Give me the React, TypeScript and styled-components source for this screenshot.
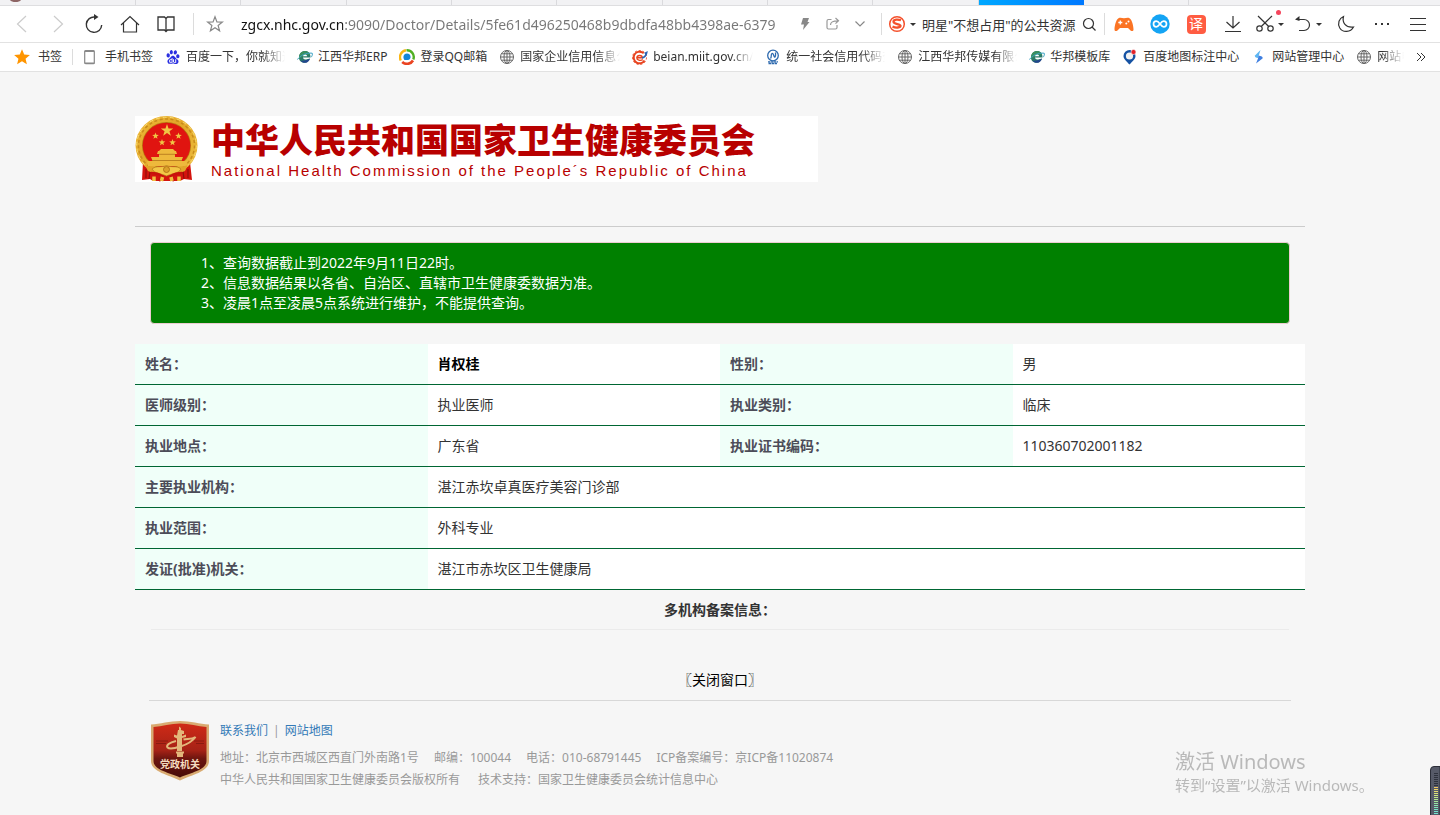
import React from "react";
import styled, { createGlobalStyle, css } from "styled-components";
import { SiBaidu } from "react-icons/si";

const GlobalStyle = createGlobalStyle`
  * { box-sizing: border-box; }
  body {
    margin: 0;
    background: #f6f6f6;
    color: #333;
    font: 14px/20px "Noto Sans", "Noto Sans CJK SC", sans-serif;
  }
  button, input {
    font: inherit;
    color: inherit;
    border: 0;
    padding: 0;
    margin: 0;
    background: none;
    outline: 0;
  }
  svg { display: block; flex: none; }
`;

/* ---------- browser chrome ---------- */

const TabStrip = styled.div`
  display: flex;
  height: 6px;
  background: #f2f2f4;
  border-bottom: 1px solid #dedee0;
  overflow: hidden;
`;

const Tab = styled.div<{ $first?: boolean; $active?: boolean }>`
  flex: none;
  width: ${(p) => (p.$first ? 136 : 105)}px;
  height: 6px;
  padding-left: 9px;
  border-right: 1px solid #dadadd;
  &:nth-child(3n) {
    width: 106px;
  }
  ${(p) =>
    p.$active &&
    css`
      border-right: 0;
      background: linear-gradient(90deg, #00a8ff, #0078ff);
    `}
`;

const Toolbar = styled.div`
  display: flex;
  align-items: center;
  height: 37px;
  padding: 0 4px;
  background: #fff;
  border-bottom: 1px solid #e2e2e2;
`;

const ToolButton = styled.button<{ $w?: number; $color?: string }>`
  position: relative;
  display: flex;
  flex: none;
  align-items: center;
  justify-content: center;
  gap: 4px;
  width: ${(p) => p.$w ?? 36}px;
  height: 36px;
  color: ${(p) => p.$color ?? "#333"};
`;

const Divider = styled.span<{ $h?: number; $m?: string }>`
  flex: none;
  width: 1px;
  height: ${(p) => p.$h ?? 22}px;
  margin: ${(p) => p.$m ?? "0"};
  background: #dcdcdc;
`;

const UrlInput = styled.input`
  flex: 1;
  min-width: 0;
  height: 30px;
  margin: 0 10px 0 10px;
  font-size: 14px;
  color: transparent;
  background: linear-gradient(90deg, #111 102px, #777 102px);
  background-clip: text;
  -webkit-background-clip: text;
`;

const SearchInput = styled.input`
  flex: none;
  width: 155px;
  height: 30px;
  margin-left: 7px;
  font-size: 13px;
  color: #333;
`;

const Caret = styled.span`
  border: 3px solid transparent;
  border-top-color: #333;
  border-bottom: 0;
`;

const RedDot = styled.span`
  position: absolute;
  top: 4px;
  right: 7px;
  width: 5px;
  height: 5px;
  border-radius: 50%;
  background: #f5455c;
`;

const Translate = styled.span`
  width: 19px;
  height: 19px;
  border-radius: 4px;
  background: #ff5c42;
  color: #fff;
  font-size: 14px;
  line-height: 18px;
  text-align: center;
`;

const BookmarkBar = styled.nav`
  display: flex;
  align-items: center;
  gap: 12px;
  height: 29px;
  padding: 0 14px;
  background: #fff;
  border-bottom: 1px solid #e2e2e2;
  font-size: 12px;
  overflow: hidden;
`;

const Bookmark = styled.a<{ $gap?: number }>`
  display: flex;
  flex: none;
  align-items: center;
  gap: ${(p) => p.$gap ?? 5}px;
  color: #333;
  text-decoration: none;
  white-space: nowrap;
`;

const BookmarkText = styled.span<{ $fade?: number }>`
  ${(p) =>
    p.$fade &&
    css`
      width: ${p.$fade}px;
      overflow: hidden;
      mask-image: linear-gradient(90deg, #000 calc(100% - 22px), transparent);
    `}
`;

const MoreButton = styled.button`
  margin-left: auto;
`;

/* ---------- page ---------- */

const Page = styled.main`
  max-width: 1170px;
  margin: 0 auto;
  padding-top: 44px;
`;

const Banner = styled.header`
  display: flex;
  width: 683px;
  max-width: 100%;
  height: 66px;
  gap: 12px;
  background: #fff;
  color: #b80000;
`;

const BannerTitle = styled.h1`
  margin: 4px 0 0;
  font-size: 34px;
  line-height: 40px;
  font-weight: 900;
  white-space: nowrap;
`;

const BannerSub = styled.p`
  margin: 0;
  font: 15px/22px "Liberation Sans", sans-serif;
  letter-spacing: 2px;
  white-space: nowrap;
`;

const Rule = styled.hr<{ $color: string; $margin: string }>`
  height: 1px;
  border: 0;
  margin: ${(p) => p.$margin};
  background: ${(p) => p.$color};
`;

const Notice = styled.ol`
  margin: 15px 15px 20px;
  padding: 10px 50px;
  border: 1px solid #ebccd1;
  border-radius: 4px;
  background: #008000;
  color: #fff;
  list-style: none;
`;

const Records = styled.table`
  width: 100%;
  table-layout: fixed;
  border-collapse: separate;
  border-spacing: 0;
`;

const cell = css`
  height: 41px;
  padding: 0 10px;
  border-bottom: 1px solid #006633;
  text-align: left;
`;

const Label = styled.th`
  ${cell}
  background: #f0fff9;
  color: #4c4c58;
  font-weight: 700;
`;

const Value = styled.td<{ $strong?: boolean }>`
  ${cell}
  background: #fff;
  ${(p) => p.$strong && "color: #000; font-weight: 700;"}
`;

const SubHeading = styled.h2`
  margin: 0 16px;
  border-bottom: 1px solid #ebebeb;
  font-size: 14px;
  line-height: 39px;
  text-align: center;
`;

const CloseLink = styled.a`
  display: block;
  margin-top: 40px;
  color: #000;
  text-align: center;
  text-decoration: none;
`;

const Footer = styled.footer`
  display: flex;
  gap: 10px;
  padding: 0 15px;
  color: #999;
  font-size: 12px;
`;

const FooterLine = styled.p<{ $gap: number; $nav?: boolean }>`
  display: flex;
  gap: ${(p) => p.$gap}px;
  margin: 0 0 ${(p) => (p.$nav ? 6 : 0)}px;
  line-height: ${(p) => (p.$nav ? 20 : 22)}px;
  white-space: nowrap;
`;

const FooterLink = styled.a`
  color: #337ab7;
  text-decoration: none;
`;

/* ---------- desktop overlays ---------- */

const Watermark = styled.div`
  position: fixed;
  right: 62px;
  bottom: 19px;
  width: 203px;
  color: #b9b9b9;
  font-size: 15px;
  line-height: 22px;
  white-space: nowrap;
`;

const WatermarkTitle = styled.div`
  font-size: 20px;
  line-height: 24px;
`;

const Gadget = styled.div`
  position: fixed;
  right: 0;
  bottom: 0;
`;

/* ---------- icons ---------- */

const Line = ({ w, h, sw = 1.2, children }: { w: number; h: number; sw?: number; children: React.ReactNode }) => (
  <svg width={w} height={h} viewBox={`0 0 ${w} ${h}`} fill="none" stroke="currentColor" strokeWidth={sw}>
    {children}
  </svg>
);

const Globe = () => (
  <Line w={16} h={16} sw={1}>
    <g stroke="#666">
      <circle cx="8" cy="8" r="6.5" />
      <ellipse cx="8" cy="8" rx="3" ry="6.5" />
      <path d="M8 1.5v13M1.5 8h13M2.4 4.8h11.2M2.4 11.2h11.2" />
    </g>
  </Line>
);

const EdgeLike = () => (
  <svg width="16" height="16" viewBox="0 0 16 16">
    <path d="M2 8.2C2 4.6 4.6 2 8 2c3.600 0 5.600 2.600 5.500 6.400H6C6.200 10.600 9.500 11 13 9.600 11.500 13 9.200 14 7.200 13.800 4 13.600 2 11.500 2 8.200z" fill="#2c7a68" />
    <path d="M2 8.500C2 4.800 5 2 8 2c2.500 0 4.300 1.300 5 3.500C9 5.500 5 7 2 10.500z" fill="#3c8f5d" />
    <path d="M3.500 11.500C5 13.500 8 14.500 10 13.400 12 12.500 12.700 11 13 9.600 10 11.500 6 12 3.500 11.500z" fill="#23468e" />
    <path d="M6 7.300C6.200 5 9.800 4.600 10.200 7.300z" fill="#fff" />
    <path d="M.5 10.500C3 6.500 9 3.500 15.200 4.200c.6 1-.2 3-1 4" fill="none" stroke="#3aa0c4" strokeWidth="1" />
  </svg>
);

const QQMail = () => (
  <svg width="16" height="16" viewBox="0 0 16 16">
    <circle cx="8" cy="8" r="6.500" fill="#fff" />
    <path d="M1.800 11.500A7 7 0 0 1 7 1.300" fill="none" stroke="#fbb614" strokeWidth="2.400" />
    <path d="M7.500 1.300A6.800 6.800 0 0 1 14.300 10.500" fill="none" stroke="#51b024" strokeWidth="2.400" />
    <path d="M14 11.500A7 7 0 0 1 3.200 13" fill="none" stroke="#ea4321" strokeWidth="2.600" />
    <path d="M8 4.500c2.300 0 3.600 1.600 3.600 3.500 0 1.500-1.100 2.900-2.700 2.900H5.400C4.700 10.100 4.400 9.200 4.400 8c0-1.900 1.400-3.500 3.600-3.500z" fill="#1686d9" />
  </svg>
);

const MiitIcon = () => (
  <svg width="16" height="16" viewBox="0 0 16 16" fill="none">
    <circle cx="7.500" cy="8.500" r="5.800" stroke="#e8431f" strokeWidth="2" strokeDasharray="27 7" pathLength="34" transform="rotate(30 7.500 8.500)" />
    <circle cx="7.500" cy="8.500" r="7" stroke="#e8431f" strokeWidth="1" strokeDasharray="2 2" />
    <path d="M4.800 8.700h5.600C10.200 5.600 5.100 5.800 4.800 8.700c0 2.600 3.600 3.400 6 2" stroke="#e8431f" strokeWidth="1.400" />
    <path d="M10 9c2.500-.6 4.200-2.600 4.700-5.500l-2 1" stroke="#2a64b4" strokeWidth="1.600" />
  </svg>
);

const CodeIcon = () => (
  <svg width="16" height="16" viewBox="0 0 16 16" fill="none" stroke="#2d69ae">
    <circle cx="8" cy="6.500" r="5.300" strokeWidth="1.300" />
    <path d="M5.500 9.500c1.500-1.500 0-4 1.500-5s2 4.500 3 3.500.5-3 .5-4.500" strokeWidth="1.300" />
    <path d="M3 12.800h10M3.500 14.500h9" strokeWidth="1.300" strokeDasharray="2.500 .5" />
  </svg>
);

const MapPin = () => (
  <svg width="16" height="16" viewBox="0 0 16 16">
    <path d="M7.500 1A6 6 0 0 0 1.500 7c0 3.400 3.200 5.200 6 8.600 2.800-3.400 6-5.200 6-8.600a6 6 0 0 0-6-6z" fill="#1552a3" />
    <circle cx="7.500" cy="7" r="3.600" fill="#f2f2f2" />
    <circle cx="11.500" cy="3" r="2.500" fill="#e32128" stroke="#fff" strokeWidth=".6" />
  </svg>
);

const BlueBolt = () => (
  <svg width="16" height="16" viewBox="0 0 16 16">
    <path d="M9.500 1 4 6.500c-.6 1.500 1 2.200 3 2.500z" fill="#5db6f2" />
    <path d="M7.500 6.500 7 9.500 5 14.500 11.500 9.500c1-1.600-1.500-2.500-4-3z" fill="#3f7fe0" />
  </svg>
);

const Phone = () => (
  <svg width="16" height="16" viewBox="0 0 16 16">
    <rect x="0.700" y="1.700" width="9.600" height="13" rx="1" fill="none" stroke="#888" strokeWidth="1.200" />
    <path d="M.7 2.200h9.600M.7 14.200h9.600" stroke="#888" strokeWidth="1.500" />
  </svg>
);

const BaiduPaw = () => (
  <svg width="16" height="16" viewBox="0 0 16 16">
    <g transform="translate(1 1)">
      <SiBaidu size={14} color="#2a2fe0" />
    </g>
  </svg>
);

const starPoints = (cx: number, cy: number, r: number, inner = 0.4) =>
  Array.from({ length: 10 }, (_, i) => {
    const a = (Math.PI / 5) * i - Math.PI / 2;
    const d = i % 2 ? r * inner : r;
    return `${(cx + d * Math.cos(a)).toFixed(2)},${(cy + d * Math.sin(a)).toFixed(2)}`;
  }).join(" ");

const Emblem = () => (
  <svg width="64" height="66" viewBox="0 0 64 66" role="img" aria-label="国徽">
    <defs>
      <linearGradient id="gold" x1="0" y1="0" x2="1" y2="1">
        <stop offset="0" stopColor="#f0bb3a" />
        <stop offset=".4" stopColor="#e3a729" />
        <stop offset="1" stopColor="#edbe3f" />
      </linearGradient>
    </defs>
    <path d="M8 46 7 64l8-1 3 2h27l4-2 8 1-2-18z" fill="#d4140e" />
    <path d="M11 53v9M15 55l-1 8M48 55l1 8M53 53v9" stroke="#93100a" strokeWidth="1.200" />
    <ellipse cx="31.500" cy="29.500" rx="31" ry="29.500" fill="url(#gold)" />
    <ellipse cx="31.500" cy="29.500" rx="28" ry="26.500" fill="none" stroke="#c98d1c" strokeWidth="1.500" strokeDasharray="3 2.500" />
    <ellipse cx="31.500" cy="29.500" rx="29.800" ry="28.300" fill="none" stroke="#f8dc72" strokeWidth="1" strokeDasharray="4 3" />
    <ellipse cx="31.500" cy="29.500" rx="24.500" ry="23.500" fill="#b97a12" />
    <ellipse cx="31.500" cy="29.500" rx="23.800" ry="22.800" fill="#e01410" />
    <g fill="#f0c544">
      <polygon points={starPoints(32, 14.500, 6.500)} />
      <polygon points={starPoints(20.500, 20, 3.500)} />
      <polygon points={starPoints(43.500, 20, 3.500)} />
      <polygon points={starPoints(27, 26.500, 3.500)} />
      <polygon points={starPoints(37.500, 26.500, 3.500)} />
    </g>
    <path d="M24 35 26 33h12l2 2h1l1 3H22l1-3zM24 38h16v3H24zM16 41h32l-2 5H18zM12 45h40l-1 5H13z" fill="#eeb93c" />
    <path d="M24 38.300h16M17 44.500h30" stroke="#b0741a" strokeWidth=".8" />
    <path d="M10 49c5 3 38 3 43 0l-3 6c-5 3-32 3-37 0z" fill="#e2a52a" />
    <path d="M17 53c5-4 9-1 14.500-3.500C37 52 41 49 46 53c-3 5-8 4-14.500 7C25 57 20 58 17 53z" fill="#f3c747" stroke="#b0741a" strokeWidth=".7" />
    <circle cx="31.500" cy="53.500" r="3" fill="#dca02a" stroke="#a86a10" strokeWidth=".8" />
    <path d="M16 57c4 0 8 1 11 3l-3 5M47 57c-4 0-8 1-11 3l3 5" fill="none" stroke="#c8120b" strokeWidth="2.500" />
    <path d="M19 60.500v4.500M27.500 61l-1 4M36 61l1 4M44 60.500v4.500" stroke="#f0c040" strokeWidth="3.500" />
  </svg>
);

const AgencyBadge = () => (
  <svg width="60" height="60" viewBox="0 0 60 60" role="img" aria-label="党政机关">
    <defs>
      <linearGradient id="badge" x1="0" y1="0" x2="0" y2="1">
        <stop offset="0" stopColor="#d02a17" />
        <stop offset=".5" stopColor="#a52216" />
        <stop offset=".65" stopColor="#6d150f" />
        <stop offset="1" stopColor="#470b08" />
      </linearGradient>
    </defs>
    <path d="M1 3.500C10 3 20 0 30 0s20 3 29 3.500V40c0 11-17 13.500-29 19.500C18 53.500 1 51 1 40z" fill="#d9ab72" />
    <path d="M3.500 6C12 5.500 21 2.500 30 2.500S48 5.500 56.500 6v34c0 9-15.500 11.500-26.500 16.500C19 51.500 3.500 49 3.500 40z" fill="url(#badge)" />
    <path d="M6 20h12M6 22.500h10M44 20h10M46 22.500h8" stroke="#8a1a10" strokeWidth="1" />
    <g fill="#e3b77b">
      <path d="M28 9h1V5.500L31 7v2l3 1v3h-2v2l4-1.500V16l-4 1v13h-5V17.500l-3-1.500v-2.500l3 1z" />
      <path d="M26 30.500h8v2h-1V36h-6v-3.500h-1z" />
    </g>
    <path d="M26 20c-7 1.500-10 4.500-8.500 6.500 3 3 22-2 28-10.500-4 2.500-8 1.500-12 2.500" fill="none" stroke="#e3b77b" strokeWidth="2" />
    <text x="30" y="47" textAnchor="middle" fill="#f5dcc0" fontSize="10" fontWeight="700">
      党政机关
    </text>
  </svg>
);

const meterColors = ["#2e323d", "#2e323d", "#2e323d", "#2e323d", "#2e323d", "#2e323d", "#2e323d", "#f0c860", "#ecd468", "#e6dc70", "#dce478", "#cee880", "#c0e888", "#b2e890", "#a4e898", "#98e8a4", "#8ce6b0", "#80e4ba", "#78e2c4", "#74e0cc", "#74e0cc"];

const Meter = () => (
  <svg width="10" height="49" viewBox="0 0 10 49">
    <path d="M10 .5H4A3.500 3.500 0 0 0 .5 4v46H10z" fill="#565a68" stroke="#2b2e38" />
    {meterColors.map((c, i) => (
      <rect key={i} x="4" y={7 + i * 2} width="4" height="1" fill={c} shapeRendering="crispEdges" />
    ))}
  </svg>
);

/* ---------- data ---------- */

const bookmarks: { icon: React.ReactNode; text: string; fade?: number }[] = [
  { icon: <Phone />, text: "手机书签" },
  { icon: <BaiduPaw />, text: "百度一下，你就知道", fade: 99 },
  { icon: <EdgeLike />, text: "江西华邦ERP" },
  { icon: <QQMail />, text: "登录QQ邮箱" },
  { icon: <Globe />, text: "国家企业信用信息公示", fade: 100 },
  { icon: <MiitIcon />, text: "beian.miit.gov.cn/", fade: 100 },
  { icon: <CodeIcon />, text: "统一社会信用代码查询", fade: 99 },
  { icon: <Globe />, text: "江西华邦传媒有限公司", fade: 99 },
  { icon: <EdgeLike />, text: "华邦模板库" },
  { icon: <MapPin />, text: "百度地图标注中心" },
  { icon: <BlueBolt />, text: "网站管理中心" },
  { icon: <Globe />, text: "网站电", fade: 27 },
];

const pairs = [
  ["姓名：", "肖权桂", "性别：", "男"],
  ["医师级别：", "执业医师", "执业类别：", "临床"],
  ["执业地点：", "广东省", "执业证书编码：", "110360702001182"],
];

const wide = [
  ["主要执业机构：", "湛江赤坎卓真医疗美容门诊部"],
  ["执业范围：", "外科专业"],
  ["发证(批准)机关：", "湛江市赤坎区卫生健康局"],
];

const BrowserTabs = () => (
  <TabStrip>
    <Tab $first>
      <svg width="14" height="3" viewBox="0 0 14 3">
        <path d="M1 0h11c-1 1.500-3 2-5.500 2S2 1.500 1 0z" fill="#8d6464" />
      </svg>
    </Tab>
    {Array.from({ length: 8 }, (_, i) => (
      <Tab key={i} />
    ))}
    <Tab $active />
    <Tab />
  </TabStrip>
);

const BrowserToolbar = () => (
  <Toolbar>
    <ToolButton aria-label="后退" $color="#ccc">
      <Line w={18} h={18}><path d="M13 1 4.500 9l8.500 8" /></Line>
    </ToolButton>
    <ToolButton aria-label="前进" $color="#ccc">
      <Line w={18} h={18}><path d="m5 1 8.500 8L5 17" /></Line>
    </ToolButton>
    <ToolButton aria-label="刷新">
      <Line w={18} h={20} sw={1.400}>
        <path d="M10 3a7.700 7.700 0 1 0 6.700 8" />
        <path d="m9 0 4.500 3L9 6z" fill="currentColor" stroke="none" />
      </Line>
    </ToolButton>
    <ToolButton aria-label="主页">
      <Line w={20} h={18}><path d="m1 10 9-8.500L19 10M3.500 8v9h13V8" /></Line>
    </ToolButton>
    <ToolButton aria-label="阅读">
      <Line w={18} h={18} sw={1.300}><path d="M1 2h6.500L9 3.500 10.500 2H17v13h-6.500L9 16.500 7.500 15H1zM9 3v14" /></Line>
    </ToolButton>
    <Divider $m="0 5px 0 9px" />
    <ToolButton aria-label="收藏" $w={32} $color="#888">
      <Line w={18} h={18} sw={1.200}><polygon points={starPoints(9, 9.500, 7.800, 0.420)} /></Line>
    </ToolButton>
    <UrlInput aria-label="地址栏" defaultValue="zgcx.nhc.gov.cn:9090/Doctor/Details/5fe61d496250468b9dbdfa48bb4398ae-6379" />
    <ToolButton aria-label="极速模式" $w={28} $color="#888">
      <svg width="10" height="14" viewBox="0 0 10 14"><path d="M3 1h6L7.500 5H9.500L3 13l1-5.500H1z" fill="#888" /></svg>
    </ToolButton>
    <ToolButton aria-label="分享" $w={28} $color="#999">
      <Line w={14} h={14}><path d="M5.500 2.500H2.500A1.500 1.500 0 0 0 1 4v6.500A1.500 1.500 0 0 0 2.500 12H9.500A1.500 1.500 0 0 0 11 10.500V8M4.500 8c0-3 2.500-4.200 7.500-4.200M9.500 1l3 2.800-3 2.800" /></Line>
    </ToolButton>
    <ToolButton aria-label="展开" $w={26} $color="#888">
      <Line w={12} h={8}><path d="m1.500 1.500 4.500 4.500 4.500-4.500" /></Line>
    </ToolButton>
    <Divider $m="0 7px 0 8px" />
    <ToolButton aria-label="搜索引擎" $w={26}>
      <svg width="18" height="18" viewBox="0 0 18 18">
        <circle cx="9" cy="9" r="7.300" fill="none" stroke="#f4512c" strokeWidth="1.500" />
        <path d="M13 5.300C10 4 5.500 4.300 5.500 6.800c0 2.800 7 1.700 7 4 0 2-4.500 2.300-8 .8" fill="none" stroke="#f4512c" strokeWidth="2.300" />
      </svg>
      <Caret />
    </ToolButton>
    <SearchInput aria-label="搜索" defaultValue={'明星"不想占用"的公共资源'} />
    <ToolButton aria-label="搜索按钮" $w={24}>
      <Line w={14} h={14}><circle cx="6.500" cy="6.500" r="5" /><path d="m10 10 3.500 3.500" /></Line>
    </ToolButton>
    <Divider $m="0 1px 0 3px" />
    <ToolButton aria-label="游戏">
      <svg width="20" height="15" viewBox="0 0 20 15">
        <path d="M4.500 1.200C6.500.3 8 1.200 10 1.200S13.500.3 15.500 1.200C18 2.500 19.500 9 19.500 12.500c0 2-2.500 2-3.700.2L14 11H6l-1.800 1.700C3 14.500.5 14.500.5 12.500.5 9 2 2.500 4.500 1.200z" fill="#fb7424" />
        <path d="M6.300 3.500v4M4.300 5.500h4" stroke="#fff" strokeWidth="1.300" />
        <circle cx="12.300" cy="6.500" r="1" fill="#fff" /><circle cx="14.500" cy="4.500" r="1" fill="#fff" />
      </svg>
    </ToolButton>
    <ToolButton aria-label="云盘">
      <svg width="20" height="20" viewBox="0 0 20 20">
        <circle cx="10" cy="10" r="9.700" fill="#14a4f4" />
        <path d="M10 10C8.500 8 7.500 7.200 6.300 7.200a2.800 2.800 0 0 0 0 5.600C7.500 12.800 8.500 12 10 10s2.500-2.800 3.700-2.800a2.800 2.800 0 0 1 0 5.600C12.500 12.800 11.500 12 10 10z" fill="none" stroke="#fff" strokeWidth="1.700" />
      </svg>
    </ToolButton>
    <ToolButton aria-label="翻译"><Translate>译</Translate></ToolButton>
    <ToolButton aria-label="下载" $w={38}>
      <Line w={18} h={18}><path d="M9 1v12M2.500 7 9 13l6.500-6M1 16.500h16" /></Line>
    </ToolButton>
    <ToolButton aria-label="截图">
      <Line w={18} h={18}><circle cx="3.500" cy="13.500" r="2.700" /><circle cx="14.500" cy="13.500" r="2.700" /><path d="M2 1l10.700 10.500M16 1 5.300 11.500" /></Line>
      <Caret />
      <RedDot />
    </ToolButton>
    <ToolButton aria-label="撤销" $w={40}>
      <Line w={18} h={18}>
        <path d="M2 4.500h8a5.500 5.500 0 0 1 0 11H5" />
        <path d="m5.500 1-4.500 3.500 4.500 1.500z" fill="currentColor" stroke="none" />
      </Line>
      <Caret />
    </ToolButton>
    <ToolButton aria-label="夜间模式">
      <Line w={18} h={18}><path d="M6.500 1.500C5 7.500 8.500 13 16.500 12 13.500 17.500 6 18 2.800 13 .2 8.500 2 3.500 6.500 1.500z" /></Line>
    </ToolButton>
    <ToolButton aria-label="更多">
      <svg width="16" height="4" viewBox="0 0 16 4" fill="#333"><path d="M1 1h2v2H1zM7 1h2v2H7zM13 1h2v2h-2z" /></svg>
    </ToolButton>
    <ToolButton aria-label="菜单">
      <Line w={16} h={14} sw={1}><path d="M0 1.500h16M0 7.500h16M0 13.500h16" /></Line>
    </ToolButton>
  </Toolbar>
);

const Bookmarks = () => (
  <BookmarkBar aria-label="书签栏">
    <Bookmark href="#" $gap={8}>
      <svg width="16" height="16" viewBox="0 0 16 16"><polygon points={starPoints(8, 8.500, 8.300, 0.450)} fill="#ff9500" /></svg>
      <BookmarkText>书签</BookmarkText>
    </Bookmark>
    <Divider $h={16} $m="0 -1px 0 -2px" />
    {bookmarks.map((b) => (
      <Bookmark href="#" key={b.text}>
        {b.icon}
        <BookmarkText $fade={b.fade}>{b.text}</BookmarkText>
      </Bookmark>
    ))}
    <MoreButton aria-label="更多书签">
      <Line w={10} h={10} sw={1}><path d="m1 1 4 4-4 4M5 1l4 4-4 4" /></Line>
    </MoreButton>
  </BookmarkBar>
);

export default function App() {
  return (
    <>
      <GlobalStyle />
      <BrowserTabs />
      <BrowserToolbar />
      <Bookmarks />
      <Page>
        <Banner>
          <Emblem />
          <div>
            <BannerTitle>中华人民共和国国家卫生健康委员会</BannerTitle>
            <BannerSub>National Health Commission of the People´s Republic of China</BannerSub>
          </div>
        </Banner>
        <Rule $color="#ccc" $margin="44px 0 0" />
        <Notice>
          <li>1、查询数据截止到2022年9月11日22时。</li>
          <li>2、信息数据结果以各省、自治区、直辖市卫生健康委数据为准。</li>
          <li>3、凌晨1点至凌晨5点系统进行维护，不能提供查询。</li>
        </Notice>
        <Records>
          <tbody>
            {pairs.map(([l1, v1, l2, v2], i) => (
              <tr key={l1}>
                <Label scope="row">{l1}</Label>
                <Value $strong={i === 0}>{v1}</Value>
                <Label scope="row">{l2}</Label>
                <Value>{v2}</Value>
              </tr>
            ))}
            {wide.map(([l, v]) => (
              <tr key={l}>
                <Label scope="row">{l}</Label>
                <Value colSpan={3}>{v}</Value>
              </tr>
            ))}
          </tbody>
        </Records>
        <SubHeading>多机构备案信息：</SubHeading>
        <CloseLink href="#">〖关闭窗口〗</CloseLink>
        <Rule $color="#d8d8d8" $margin="10px 14px 20px" />
        <Footer>
          <AgencyBadge />
          <div>
            <FooterLine $gap={5} $nav>
              <FooterLink href="#">联系我们</FooterLink>
              <span>|</span>
              <FooterLink href="#">网站地图</FooterLink>
            </FooterLine>
            <FooterLine $gap={15}>
              <span>地址：北京市西城区西直门外南路1号</span>
              <span>邮编：100044</span>
              <span>电话：010-68791445</span>
              <span>ICP备案编号：京ICP备11020874</span>
            </FooterLine>
            <FooterLine $gap={18}>
              <span>中华人民共和国国家卫生健康委员会版权所有</span>
              <span>技术支持：国家卫生健康委员会统计信息中心</span>
            </FooterLine>
          </div>
        </Footer>
      </Page>
      <Watermark>
        <WatermarkTitle>激活 Windows</WatermarkTitle>
        转到“设置”以激活 Windows。
      </Watermark>
      <Gadget><Meter /></Gadget>
    </>
  );
}
